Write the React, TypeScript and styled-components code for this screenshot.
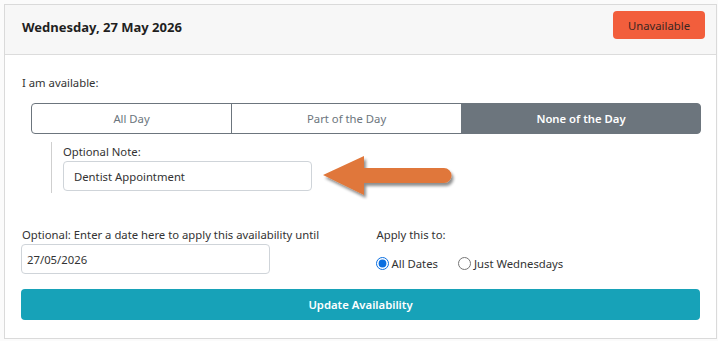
import React, { useState } from 'react';
import styled, { createGlobalStyle } from 'styled-components';

const GlobalStyle = createGlobalStyle`
    body {
        margin: 0;
        background: #fbfbfb;
        font-family: "Noto Sans", "Open Sans", sans-serif;
        color: #333;
    }
`

const Page = styled.div`
    padding: 4px 2px 0 4px;
`

const Card = styled.div`
    width: 711px;
    height: 333px;
    border: 1px solid #dadada;
    background: #fff;
    display: flex;
    flex-direction: column;
`

const CardHeader = styled.div`
    height: 50px;
    box-sizing: border-box;
    background: #f7f7f7;
    border-bottom: 1px solid #dcdcdc;
    display: flex;
    align-items: flex-start;
    justify-content: space-between;
    padding: 6px 11px 0 17px;
`

const Title = styled.h1`
    margin: 4px 0 0;
    font-size: 13px;
    line-height: 24px;
    font-weight: 700;
    color: #1f1f1f;
`

const StatusButton = styled.button`
    width: 92px;
    height: 28px;
    border: none;
    border-radius: 4px;
    background: #f25e3c;
    color: #3b2622;
    font-family: inherit;
    font-size: 11.3px;
    padding: 0;
`

const CardBody = styled.div`
    position: relative;
    padding: 19px 15px 0 17px;
`

const Label = styled.div`
    font-size: 11.3px;
    line-height: 18px;
    color: #333;
`

const ButtonGroup = styled.div`
    display: flex;
    margin: 11px 0 0 9px;
    height: 31px;
`

const Segment = styled.button<{ $grow: number; $active?: boolean }>`
    flex: ${p => p.$grow} 1 0;
    font-family: inherit;
    font-size: 11.3px;
    padding: 0;
    border: 1px solid #6c757d;
    background: ${p => (p.$active ? '#6c757d' : '#fff')};
    color: ${p => (p.$active ? '#fff' : '#6c757d')};
    font-weight: ${p => (p.$active ? 600 : 400)};
    &:not(:first-child) {
        margin-left: -1px;
    }
    &:first-child {
        border-radius: 4px 0 0 4px;
    }
    &:last-child {
        border-radius: 0 4px 4px 0;
    }
`

const NoteBlock = styled.div`
    position: relative;
    margin: 8px 0 0 29px;
    padding: 1px 0 0 11px;
    border-left: 1px solid #cfcfcf;
    height: 50px;
`

const TextInput = styled.input<{ $width: number }>`
    display: block;
    box-sizing: border-box;
    width: ${p => p.$width}px;
    height: 30px;
    border: 1px solid #cfd4d9;
    border-radius: 4px;
    padding: 0 10px;
    font-family: inherit;
    font-size: 11.3px;
    color: #333;
    outline: none;
`

const DateInput = styled(TextInput)`
    margin-left: -1px;
    padding-left: 5px;
`

const Arrow = styled.svg`
    position: absolute;
    left: 268px;
    top: 12px;
`

const FormRow = styled.div`
    display: grid;
    grid-template-columns: 1fr 1fr;
    margin-top: 33px;
`

const Column = styled.div<{ $inset?: number }>`
    padding-left: ${p => p.$inset ?? 0}px;
`

const RadioRow = styled.div`
    display: flex;
    align-items: center;
    gap: 20px;
    margin-top: 12px;
    margin-left: -1px;
`

const RadioLabel = styled.label`
    display: flex;
    align-items: center;
    font-size: 11.3px;
    color: #333;
    input {
        margin: 0 3px 0 0;
        width: 13px;
        height: 13px;
        accent-color: #0b6fe0;
    }
`

const SubmitButton = styled.button`
    display: block;
    width: 100%;
    height: 31px;
    margin: 15px 0 0 -1px;
    border: none;
    border-radius: 4px;
    background: #17a2b8;
    color: #fff;
    font-family: inherit;
    font-size: 11.3px;
    font-weight: 600;
`

const options = [
    { key: 'all', label: 'All Day', grow: 200 },
    { key: 'part', label: 'Part of the Day', grow: 230 },
    { key: 'none', label: 'None of the Day', grow: 239 },
]

const App: React.FC = () => {
    const [mode, setMode] = useState('none')
    const [applyTo, setApplyTo] = useState('all')

    return (
        <Page>
            <GlobalStyle />
            <Card>
                <CardHeader>
                    <Title>Wednesday, 27 May 2026</Title>
                    <StatusButton>Unavailable</StatusButton>
                </CardHeader>
                <CardBody>
                    <Label>I am available:</Label>
                    <ButtonGroup>
                        {options.map(o => (
                            <Segment key={o.key} $grow={o.grow} $active={mode === o.key} onClick={() => setMode(o.key)}>
                                {o.label}
                            </Segment>
                        ))}
                    </ButtonGroup>
                    <NoteBlock>
                        <Label>Optional Note:</Label>
                        <TextInput $width={249} defaultValue="Dentist Appointment" />
                        <Arrow width="140" height="50" viewBox="0 0 140 50">
                            <defs>
                                <filter id="arrowShadow" x="-10%" y="-20%" width="130%" height="160%">
                                    <feGaussianBlur in="SourceAlpha" stdDeviation="1.6" />
                                    <feOffset dx="2" dy="3" result="blur" />
                                    <feComponentTransfer>
                                        <feFuncA type="linear" slope="0.45" />
                                    </feComponentTransfer>
                                    <feMerge>
                                        <feMergeNode />
                                        <feMergeNode in="SourceGraphic" />
                                    </feMerge>
                                </filter>
                            </defs>
                            <path
                                d="M3 21 L44 2 L44 14 L124 14 A7.5 7.5 0 0 1 124 29 L44 29 L44 41 Z"
                                fill="#e0773a"
                                filter="url(#arrowShadow)"
                            />
                        </Arrow>
                    </NoteBlock>
                    <FormRow>
                        <Column>
                            <Label>Optional: Enter a date here to apply this availability until</Label>
                            <DateInput $width={249} defaultValue="27/05/2026" />
                        </Column>
                        <Column $inset={15}>
                            <Label>Apply this to:</Label>
                            <RadioRow>
                                <RadioLabel>
                                    <input type="radio" name="apply" checked={applyTo === 'all'} onChange={() => setApplyTo('all')} />
                                    All Dates
                                </RadioLabel>
                                <RadioLabel>
                                    <input type="radio" name="apply" checked={applyTo === 'wed'} onChange={() => setApplyTo('wed')} />
                                    Just Wednesdays
                                </RadioLabel>
                            </RadioRow>
                        </Column>
                    </FormRow>
                    <SubmitButton>Update Availability</SubmitButton>
                </CardBody>
            </Card>
        </Page>
    );
};

export default App;
